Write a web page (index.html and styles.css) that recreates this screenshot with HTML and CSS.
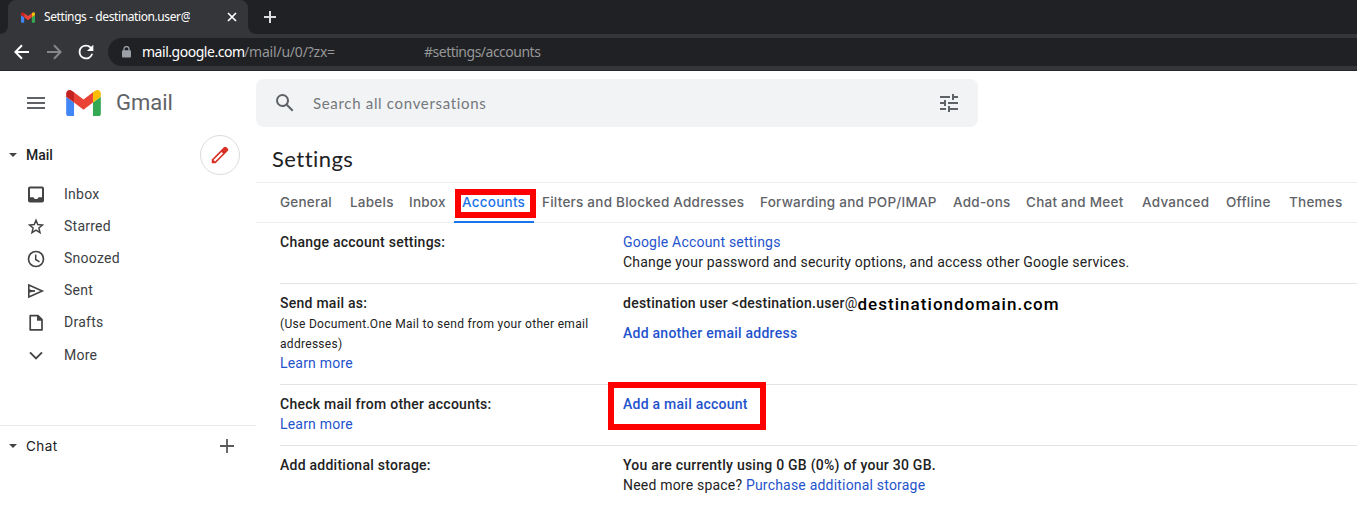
FILE: index.html
```
<!DOCTYPE html>
<html lang="en">
<head>
<meta charset="utf-8">
<title>Settings - Gmail</title>
<link rel="stylesheet" href="styles.css">
</head>
<body>
<div class="browser">
  <div class="tabstrip">
    <div class="strip-start"></div>
    <div class="browser-tab">
      <svg class="favicon" width="14" height="11" viewBox="52 42 88 66"><use href="#gmail"/></svg>
      <span class="browser-title">Settings - destination.user@</span>
      <svg class="tab-close" width="10" height="10" viewBox="0 0 10 10"><path d="M1 1l8 8M9 1L1 9" stroke="#fff" stroke-width="1.7"/></svg>
    </div>
    <div class="strip-rest">
      <svg width="12" height="12" viewBox="0 0 12 12"><path d="M6 0v12M0 6h12" stroke="#dcdde0" stroke-width="2"/></svg>
    </div>
  </div>
  <div class="toolbar">
    <svg class="nav-back" width="16" height="16" viewBox="0 0 16 16"><path d="M15 8H2M8 1.2L1.400 8 8 14.800" fill="none" stroke="#fff" stroke-width="2"/></svg>
    <svg class="nav-forward" width="16" height="16" viewBox="0 0 16 16"><path d="M1 8h13M8 1.200L14.600 8 8 14.800" fill="none" stroke="#85868a" stroke-width="2"/></svg>
    <svg class="nav-reload" width="22" height="22" viewBox="0 0 24 24"><path fill="#fff" d="M17.65 6.35A7.96 7.96 0 0 0 12 4a8 8 0 1 0 7.730 10h-2.080A6 6 0 1 1 12 6c1.660 0 3.140.69 4.220 1.780L13 11h7V4l-2.350 2.350z"/></svg>
    <div class="address">
      <svg width="9" height="12" viewBox="0 0 9 12"><path d="M2 5V3a2.500 2.500 0 0 1 5 0v2" fill="none" stroke="#9aa0a6" stroke-width="1.300"/><rect x="0" y="4.200" width="9" height="7.400" rx="1" fill="#9aa0a6"/></svg>
      <span class="url-host">mail.google.com</span><span class="url-path">/mail/u/0/?zx=</span><span class="url-hash">#settings/accounts</span>
    </div>
  </div>
</div>

<div class="app">
  <aside class="side">
    <div class="brand">
      <svg class="menu" width="18" height="12" viewBox="0 0 18 12"><path d="M0 1h18M0 6h18M0 11h18" stroke="#5f6368" stroke-width="2"/></svg>
      <svg class="logo" width="35" height="26" viewBox="52 42 88 66">
        <g id="gmail">
          <path fill="#4285f4" d="M58 108h14V74L52 59v43c0 3.320 2.690 6 6 6"/>
          <path fill="#34a853" d="M120 108h14c3.320 0 6-2.690 6-6V59l-20 15"/>
          <path fill="#fbbc04" d="M120 48v26l20-15v-8c0-7.420-8.470-11.650-14.400-7.200"/>
          <path fill="#ea4335" d="M72 74V48l24 18 24-18v26L96 92"/>
          <path fill="#c5221f" d="M52 51v8l20 15V48l-5.600-4.200c-5.940-4.450-14.400-.22-14.400 7.200"/>
        </g>
      </svg>
      <span class="brand-name">Gmail</span>
    </div>
    <div class="section-head mail-head">
      <svg class="caret" width="8" height="4" viewBox="0 0 8 4"><path d="M0 0h8L4 4z" fill="#444"/></svg>
      <span class="section-name mail-name">Mail</span>
      <button class="compose"><svg width="22" height="22" viewBox="0 0 24 24"><path fill="#d93025" d="M20.410 4.940l-1.350-1.350c-.78-.78-2.050-.78-2.830 0L3 16.820V21h4.180L20.410 7.770c.79-.78.79-2.050 0-2.830zM6.600 19.060l-1.660-1.660L13.700 8.700l1.600 1.600z"/></svg></button>
    </div>
    <ul class="folders">
      <li><svg width="20" height="20" viewBox="0 0 20 20"><path fill="#444" fill-rule="evenodd" d="M4 2.500h12a2 2 0 0 1 2 2v12a2 2 0 0 1-2 2H4a2 2 0 0 1-2-2v-12c0-1.100.9-2 2-2zM4 4.500v8.700h3.500c.4 1.200 1.300 1.900 2.500 1.900s2.100-.7 2.500-1.900H16V4.500z"/></svg><span>Inbox</span></li>
      <li><svg width="20" height="20" viewBox="0 0 20 20"><path fill="none" stroke="#444" stroke-width="1.500" d="M10 4.300l1.750 4.300 4.700.4-3.550 3.050 1.100 4.600-4-2.500-4 2.500 1.100-4.600L3.550 9l4.700-.4z"/></svg><span>Starred</span></li>
      <li><svg width="20" height="20" viewBox="0 0 20 20"><circle cx="10" cy="11" r="7.500" fill="none" stroke="#444" stroke-width="1.700"/><path d="M9.700 6.500v5l3.800 2.400" fill="none" stroke="#444" stroke-width="1.500"/></svg><span>Snoozed</span></li>
      <li><svg width="20" height="20" viewBox="0 0 20 20"><path fill="none" stroke="#444" stroke-width="1.600" d="M2.800 5L16.300 11 2.800 17zM3 11h6"/><path d="M3 9.300L9.500 11 3 12.700z" fill="#444"/></svg><span>Sent</span></li>
      <li><svg width="20" height="20" viewBox="0 0 20 20"><path fill="none" stroke="#444" stroke-width="1.700" stroke-linejoin="round" d="M4.200 3.700h7.800l4 4v10.200H4.200z"/><path d="M11 3.200v5.500h5.700z" fill="#444"/></svg><span>Drafts</span></li>
      <li class="more"><svg width="20" height="20" viewBox="0 0 20 20"><path fill="none" stroke="#444" stroke-width="1.900" d="M4 7.300l6 6 6-6"/></svg><span>More</span></li>
    </ul>
    <div class="section-head chat-head">
      <svg class="caret" width="8" height="4" viewBox="0 0 8 4"><path d="M0 0h8L4 4z" fill="#444"/></svg>
      <span class="section-name chat-name">Chat</span>
      <svg class="chat-add" width="14" height="14" viewBox="0 0 14 14"><path d="M7 0v14M0 7h14" stroke="#5a5a5a" stroke-width="1.800"/></svg>
    </div>
  </aside>

  <main class="main">
    <div class="search">
      <svg class="search-icon" width="24" height="24" viewBox="0 0 24 24"><path fill="#5f6368" d="M20.490 19l-5.730-5.730C15.530 12.200 16 10.910 16 9.500A6.500 6.500 0 1 0 9.500 16c1.410 0 2.700-.47 3.770-1.240L19 20.490 20.490 19zM5 9.500C5 7.010 7.010 5 9.500 5S14 7.010 14 9.500 11.990 14 9.500 14 5 11.990 5 9.500z"/></svg>
      <span class="search-hint">Search all conversations</span>
      <svg class="tune" width="24" height="24" viewBox="0 0 24 24"><path fill="#5f6368" d="M3 17v2h6v-2H3zM3 5v2h10V5H3zm10 16v-2h8v-2h-8v-2h-2v6h2zM7 9v2H3v2h4v2h2V9H7zm14 4v-2H11v2h10zm-6-4h2V7h4V5h-4V3h-2v6z"/></svg>
    </div>
    <h1 class="title">Settings</h1>
    <nav class="tabs">
      <a class="tab">General</a>
      <a class="tab">Labels</a>
      <a class="tab">Inbox</a>
      <a class="tab active">Accounts<i class="mark mark-tab"></i></a>
      <a class="tab">Filters and Blocked Addresses</a>
      <a class="tab">Forwarding and POP/IMAP</a>
      <a class="tab">Add-ons</a>
      <a class="tab">Chat and Meet</a>
      <a class="tab">Advanced</a>
      <a class="tab">Offline</a>
      <a class="tab">Themes</a>
    </nav>
    <div class="rows">
      <section class="row">
        <div><b>Change account settings:</b></div>
        <div><p><a class="link">Google Account settings</a></p><p>Change your password and security options, and access other Google services.</p></div>
      </section>
      <section class="row">
        <div><b>Send mail as:</b><p class="small">(Use Document.One Mail to send from your other email addresses)</p><a class="link">Learn more</a></div>
        <div><p class="identity"><b>destination user &lt;destination.user</b><span>@</span><b class="domain">destinationdomain.com</b></p><p class="another"><a class="link"><b>Add another email address</b></a></p></div>
      </section>
      <section class="row">
        <div><b>Check mail from other accounts:</b><p><a class="link">Learn more</a></p></div>
        <div><p class="add-account"><a class="link"><b>Add a mail account</b></a><i class="mark mark-add"></i></p></div>
      </section>
      <section class="row">
        <div><b>Add additional storage:</b></div>
        <div><p><b>You are currently using 0 GB (0%) of your 30 GB.</b></p><p>Need more space? <a class="link">Purchase additional storage</a></p></div>
      </section>
    </div>
  </main>
</div>
</body>
</html>
```
FILE: styles.css
```
* { box-sizing: border-box; }
body { margin: 0; background: #fff; color: #222; font: 14px/20px Roboto, sans-serif; overflow: hidden; }
p, h1, ul { margin: 0; padding: 0; }
svg { display: block; flex: none; }
b { font-weight: 500; letter-spacing: .25px; }
span, a { white-space: nowrap; }

.browser { height: 71px; background: #35363a; border-bottom: 1px solid #242528; font-family: "Noto Sans", sans-serif; }
.tabstrip { display: flex; height: 34px; background: linear-gradient(#202124 0 20px, #35363a 20px); }
.strip-start { width: 8px; background: #202124; border-bottom-right-radius: 8px; }
.browser-tab { display: flex; align-items: center; width: 240px; padding: 0 11px 0 13px; background: #35363a; border-radius: 8px 8px 0 0; font-size: 12px; color: #fff; }
.browser-title { width: 146px; margin-left: 9px; letter-spacing: -.4px; overflow: hidden; }
.tab-close { margin-left: 37px; }
.strip-rest { display: flex; flex: 1; align-items: center; padding-left: 16px; background: #202124; border-bottom-left-radius: 8px; }
.toolbar { display: flex; align-items: center; height: 36px; padding-left: 14px; }
.nav-forward { margin-left: 16px; }
.nav-reload { margin-left: 13px; }
.address { display: flex; flex: 1; align-items: center; height: 28px; margin-left: 11px; padding-left: 14px; background: #202124; border-radius: 14px 0 0 14px; font-size: 14px; color: #969798; }
.url-host { width: 102px; margin-left: 11px; color: #fff; letter-spacing: -.47px; }
.url-path { width: 180px; letter-spacing: -.2px; }
.url-hash { letter-spacing: -.5px; }

.app { display: flex; height: 447px; }
.side { width: 256px; flex: none; }
.brand { display: flex; align-items: center; height: 64px; padding-left: 27px; }
.logo { margin-left: 21px; }
.brand-name { margin-left: 15px; font-size: 22px; color: #5f6368; }
.section-head { display: flex; align-items: center; padding-left: 9px; }
.section-name { margin-left: 9px; color: #202124; font-family: Inter, sans-serif; }
.mail-head { height: 40px; }
.mail-name { font-family: Roboto, sans-serif; font-weight: 500; font-size: 14px; }
.compose { display: grid; place-items: center; width: 40px; height: 40px; margin: 0 16px 0 auto; padding: 0; border: 1px solid #dadce0; border-radius: 50%; background: #fff; }
.folders { height: 250px; padding: 3px 0 0 26px; list-style: none; color: #3c4043; }
.folders li { display: flex; align-items: center; gap: 18px; height: 32px; letter-spacing: .25px; }
.folders .more { height: 34px; }
.chat-head { height: 41px; border-top: 1px solid #e9e9e9; }
.chat-name { font-size: 13.5px; letter-spacing: .45px; }
.chat-add { margin: 0 22px 0 auto; }

.main { flex: 1; min-width: 0; padding-top: 8px; }
.search { display: flex; align-items: center; width: 722px; height: 48px; padding: 0 17px; background: #f1f3f4; border-radius: 8px; font: 15px Lato, sans-serif; color: #74777b; }
.search-hint { flex: 1; margin-left: 16px; letter-spacing: .68px; }
.title { height: 55px; padding: 16px 0 0 16px; font: 400 22px/32px Lato, sans-serif; letter-spacing: .45px; color: #202124; }
.tabs { display: grid; grid-template-columns: 70px 59px 53px 80px 218px 193px 73px 116px 84px 63px 70px; height: 41px; padding-left: 16px; border: solid #ebedef; border-width: 1px 0; font: 500 13.5px/39px Inter, sans-serif; letter-spacing: .24px; color: #5f6368; }
.tab { position: relative; padding-left: 8px; }
.active { color: #1a73e8; height: 40px; border-bottom: 2px solid #1a73e8; }
.mark { position: absolute; border: 6px solid #f00; }
.mark-tab { left: 1px; top: 6px; width: 81px; height: 29px; }

.rows { padding-left: 24px; letter-spacing: .2px; }
.row { display: grid; grid-template-columns: 343px 1fr; padding: 9px 0 11px; border-bottom: 1px solid #e2e3e4; }
.row:last-child { border: 0; }
.small { width: 325px; padding-top: 1px; margin-bottom: -1px; font-size: 12px; letter-spacing: .3px; }
.link { color: #1f53cc; }
.identity { display: flex; height: 20px; }
.domain { padding-top: 1px; color: #000; font-size: 17px; letter-spacing: 1.05px; }
.another { margin-top: 10px; }
.add-account { position: relative; }
.mark-add { left: -15px; top: -12px; width: 158px; height: 48px; }
```
